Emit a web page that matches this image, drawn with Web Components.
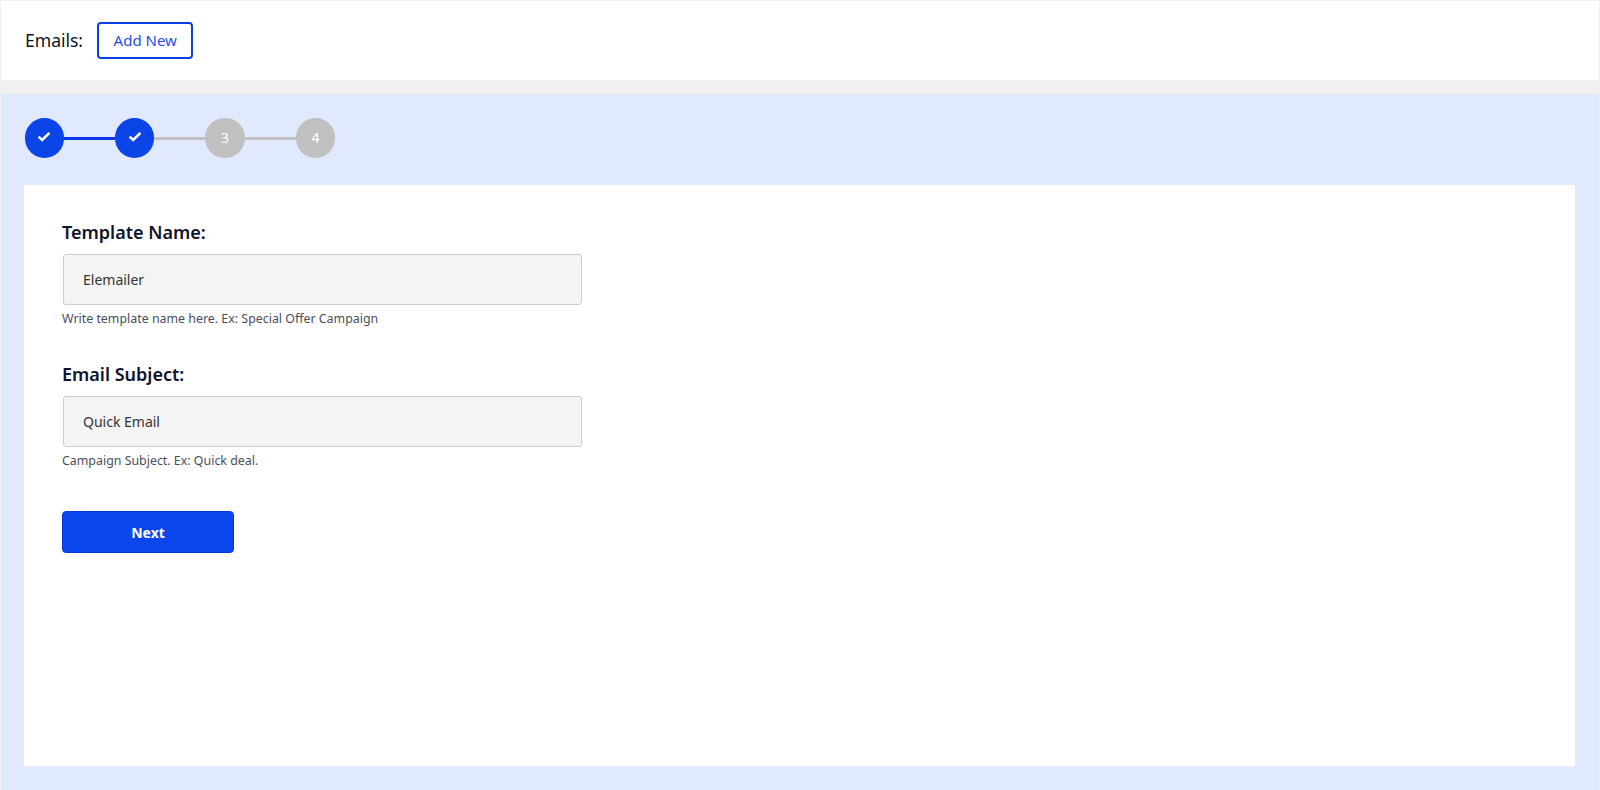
<!DOCTYPE html>
<html lang="en"><head><meta charset="utf-8"><title>Emails</title>
<style>
html,body{margin:0;height:100%}
body{background:#f0f0f0;font-family:"Noto Sans","Open Sans",sans-serif;overflow:hidden}
</style></head><body>
<email-app>
  <top-bar slot="top" label="Emails:" action="Add New"></top-bar>
  <wizard-panel slot="main">
    <step-track></step-track>
    <form-card>
      <text-field label="Template Name:" value="Elemailer" help="Write template name here. Ex: Special Offer Campaign"></text-field>
      <text-field label="Email Subject:" value="Quick Email" help="Campaign Subject. Ex: Quick deal."></text-field>
      <next-button>Next</next-button>
    </form-card>
  </wizard-panel>
</email-app>
<script>
function def(name, html, init){
  customElements.define(name, class extends HTMLElement{
    constructor(){super();this.attachShadow({mode:'open'}).innerHTML=html;}
    connectedCallback(){ if(init) init(this, this.shadowRoot); }
  });
}
def('email-app',`<style>:host{display:flex;flex-direction:column;gap:14px;height:790px;box-sizing:border-box;padding:1px 1px 0}</style><slot name="top"></slot><slot name="main"></slot>`);
def('top-bar',`<style>
:host{display:flex;align-items:center;flex:none;height:79px;box-sizing:border-box;background:#fff;padding:0 0 0 24px;gap:14px;color:#10131f}
.l{font-size:17.6px;line-height:24px;letter-spacing:-.05px;position:relative;top:-1px}
button{all:unset;box-sizing:border-box;width:96.5px;height:37px;border:2px solid #0a3fe8;border-radius:4px;color:#2a4be8;font:15px/33px "Noto Sans",sans-serif;text-align:center}
</style><span class="l"></span><button></button>`,(h,s)=>{s.querySelector('.l').textContent=h.getAttribute('label');s.querySelector('button').textContent=h.getAttribute('action');});
def('wizard-panel',`<style>:host{display:flex;flex-direction:column;flex:1;min-height:0;background:#e1e9fe;padding:24px 24px 24px 23px;box-sizing:border-box;gap:27px}</style><slot></slot>`);
const check=`<svg width="14" height="11" viewBox="0 0 14 11" style="position:relative;top:-1px"><path d="M1.6 5.6 5.2 9 12.4 1.8" fill="none" stroke="#fff" stroke-width="2.6"/></svg>`;
def('step-track',`<style>
:host{display:flex;align-items:center;flex:none;height:40px;padding-left:.6px}
.c{width:39.4px;height:39.4px;border-radius:50%;display:flex;align-items:center;justify-content:center;color:#fff;font-size:14px;background:#c0c0c0;flex:none}
.c.d{background:#0b45e8}
.b{width:51px;height:3px;background:#c0c0c0}
.b.d{background:#0b36e8}
</style>
<div class="c d">${check}</div><div class="b d"></div><div class="c d">${check}</div><div class="b"></div><div class="c">3</div><div class="b"></div><div class="c">4</div>`);
def('form-card',`<style>:host{display:flex;flex-direction:column;align-items:flex-start;flex:1;background:#fff;padding:35px 38px 36px 39px;box-sizing:border-box;gap:35px}
</style><slot></slot>`);
def('text-field',`<style>
:host{display:block;width:519px}
.l{font-size:18px;line-height:24px;font-weight:600;color:#10132e;margin:0 0 10px -1px}
.i{box-sizing:border-box;height:51px;background:#f4f4f4;border:1px solid #cdcdcd;border-radius:3px;padding:0 19px;font-size:14px;line-height:49px;color:#333}
.h{font-size:12.4px;line-height:16px;color:#4b4f5c;margin:6px 0 0 -1px}
</style><div class="l"></div><div class="i"></div><div class="h"></div>`,(h,s)=>{
 s.querySelector('.l').textContent=h.getAttribute('label');
 s.querySelector('.i').textContent=h.getAttribute('value');
 s.querySelector('.h').textContent=h.getAttribute('help');});
def('next-button',`<style>
:host{display:flex;align-items:center;justify-content:center;width:172px;height:42px;box-sizing:border-box;background:#0b45ec;border:1px solid #0a35e0;border-radius:4px;color:#fff;font-size:14px;font-weight:700;margin:7px 0 0 -1px}
</style><slot></slot>`);
</script>
</body></html>
